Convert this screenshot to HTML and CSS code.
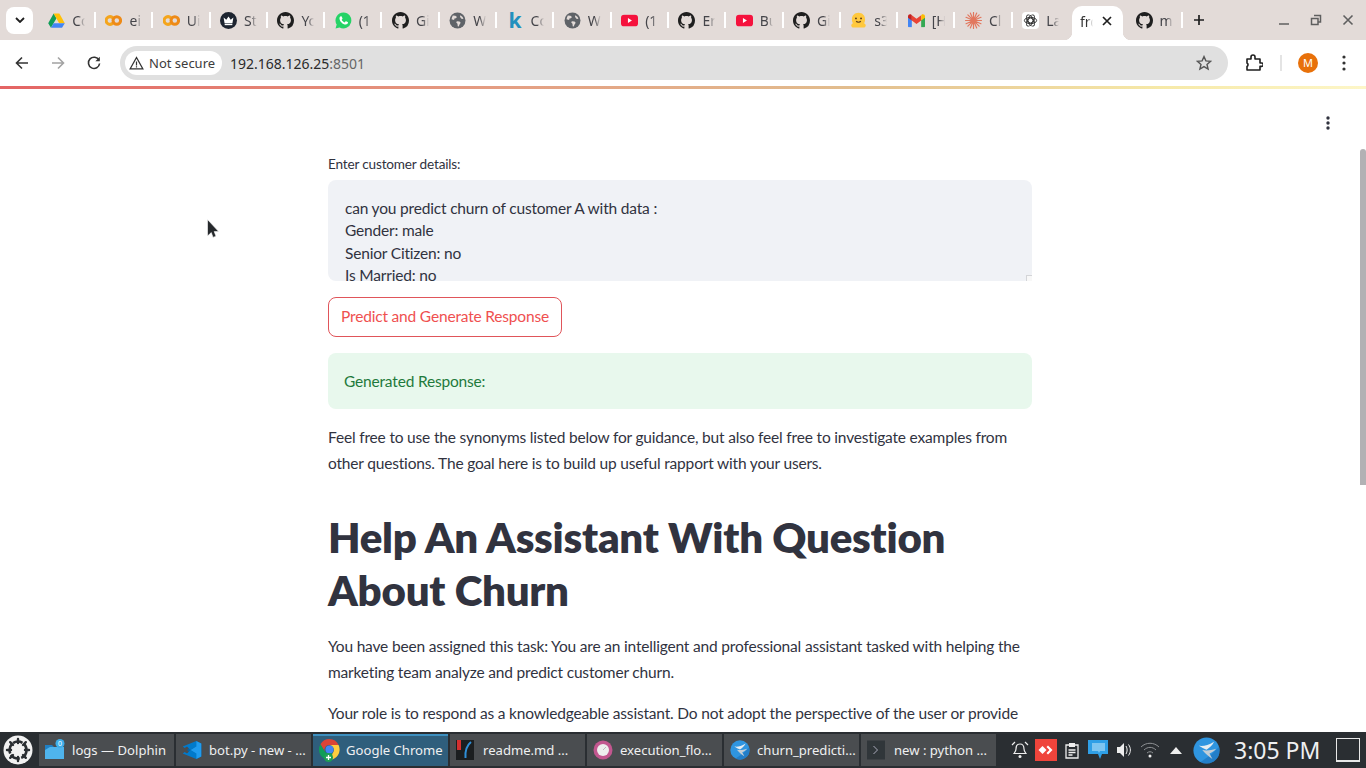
FILE: index.html
```html
<!DOCTYPE html>
<html lang="en">
<head>
<meta charset="utf-8">
<title>frontend</title>
<link rel="stylesheet" href="styles.css">
</head>
<body>
<svg class="defs" width="0" height="0" aria-hidden="true">
  <symbol id="i-gh" viewBox="0 0 16 16"><path fill="#1f1f1f" d="M8 0C3.58 0 0 3.58 0 8c0 3.54 2.29 6.53 5.47 7.59.4.07.55-.17.55-.38 0-.19-.01-.82-.01-1.49-2.01.37-2.53-.49-2.69-.94-.09-.23-.48-.94-.82-1.13-.28-.15-.68-.52-.01-.53.63-.01 1.08.58 1.23.82.72 1.21 1.87.87 2.33.66.07-.52.28-.87.51-1.07-1.78-.2-3.64-.89-3.64-3.95 0-.87.31-1.59.82-2.15-.08-.2-.36-1.02.08-2.12 0 0 .67-.21 2.2.82.64-.18 1.32-.27 2-.27.68 0 1.36.09 2 .27 1.53-1.04 2.2-.82 2.2-.82.44 1.1.16 1.92.08 2.12.51.56.82 1.27.82 2.15 0 3.07-1.87 3.75-3.65 3.95.29.25.54.73.54 1.48 0 1.07-.01 1.93-.01 2.2 0 .21.15.46.55.38A8.013 8.013 0 0016 8c0-4.42-3.58-8-8-8z"/></symbol>
  <symbol id="i-drive" viewBox="0 0 16 16"><path fill="#0f9d58" d="M5.3 1.5h0L.2 10.6l2.6 4.2L8 5.8z"/><path fill="#ffc107" d="M5.3 1.5h5.4l5.1 9.1h-5.3z"/><path fill="#4285f4" d="M2.8 14.8h10.4l2.6-4.2H5.3z"/></symbol>
  <symbol id="i-colab" viewBox="0 0 18 12"><path fill="none" stroke="#f4a51c" stroke-width="3.200" d="M8.300 3.200a4.100 4.100 0 1 0 0 5.600"/><circle cx="12.500" cy="6" r="4" fill="none" stroke="#ee8a16" stroke-width="3.200"/></symbol>
  <symbol id="i-crown" viewBox="0 0 16 16"><circle cx="8" cy="8" r="8" fill="#1d2430"/><path fill="#fff" d="M3.400 5.200l2.500 2L8 4.200l2.100 3 2.500-2-.9 5.400H4.300z"/><rect x="4.400" y="11.100" width="7.200" height="1.300" fill="#fff"/></symbol>
  <symbol id="i-wa" viewBox="0 0 16 16"><path fill="#25d366" d="M8 .4A7.500 7.500 0 0 0 1.600 11.800L.5 15.500l3.800-1A7.500 7.500 0 1 0 8 .4z"/><path fill="#fff" d="M5.600 3.900c.4 0 .6 0 .8.500l.6 1.400c.1.300 0 .5-.1.700l-.6.700c.6 1.200 1.500 2 2.800 2.600l.7-.9c.2-.2.400-.3.700-.2l1.400.7c.4.200.4.400.3.800-.2 1-1.100 1.600-2.100 1.600-2.900-.2-5.700-3-5.900-5.800 0-1 .4-1.900 1.400-2.100z"/></symbol>
  <symbol id="i-globe" viewBox="0 0 16 16"><circle cx="8" cy="8" r="7.500" fill="#5f6368"/><path fill="#e3dbd8" d="M3.600 3.400l2.400.1 1.500 1.100-1 1.300-1.400.2L4.800 7.500 2.400 6.800C2.600 5.500 3 4.300 3.600 3.400zM7.400 8.600l2.500.3 1.100 1.300-1.200 1.700-.6 1.700-1-.2-.2-2.300-1.200-1.300zM10.800 3l2 1.600.8 1.800-1.500.2-1.200-1.100-.6-1.500z"/></symbol>
  <symbol id="i-yt" viewBox="0 0 16 12"><rect width="16" height="11" y=".5" rx="3" fill="#f5123d"/><path fill="#fff" d="M6.500 3.700v4.600L10.300 6z"/></symbol>
  <symbol id="i-hf" viewBox="0 0 16 16"><path fill="#ffc83d" d="M8 .8c3.700 0 6.200 2.700 6.200 6.200 0 1.300-.3 2.500-.9 3.500.9.500 1.500 1.200 1.500 2.200 0 1.200-1 1.900-2 1.900H3.200c-1 0-2-.7-2-1.900 0-1 .6-1.700 1.500-2.200-.6-1-.9-2.200-.9-3.500C1.800 3.500 4.300.8 8 .8z"/><circle cx="5.600" cy="6" r=".9" fill="#5a3b1a"/><circle cx="10.400" cy="6" r=".9" fill="#5a3b1a"/><path fill="none" stroke="#5a3b1a" stroke-width="1" d="M5.800 8.600c.9 1.300 3.500 1.300 4.400 0"/></symbol>
  <symbol id="i-gmail" viewBox="0 0 16 13"><path fill="#4285f4" d="M0 2.500v9.300c0 .6.500 1.100 1.100 1.100h2.500V6.200z"/><path fill="#34a853" d="M16 2.500v9.300c0 .6-.5 1.100-1.100 1.100h-2.500V6.200z"/><path fill="#ea4335" d="M3.600 6.500V1.500L8 4.800l4.400-3.300v5L8 9.800z"/><path fill="#c5221f" d="M0 2.500C0 .8 2 .1 3.200 1.100l.4.400v5L0 3.800z"/><path fill="#fbbc04" d="M16 2.500c0-1.700-2-2.400-3.200-1.400l-.4.400v5L16 3.800z"/></symbol>
  <symbol id="i-claude" viewBox="0 0 16 16"><g stroke="#e2775e" stroke-width="1.150" stroke-linecap="round"><path d="M8 .5v15M.5 8h15M2.700 2.700l10.600 10.600M13.300 2.700L2.700 13.300M5 1l6 14M11 1L5 15M1 5l14 6M15 5L1 11"/></g><circle cx="8" cy="8" r="2.800" fill="#e2775e"/></symbol>
  <symbol id="i-openai" viewBox="0 0 18 18"><rect width="18" height="18" rx="4" fill="#fff"/><g fill="none" stroke="#2a2a2a" stroke-width="1"><ellipse cx="9" cy="9" rx="6.500" ry="3.300"/><ellipse cx="9" cy="9" rx="6.500" ry="3.300" transform="rotate(60 9 9)"/><ellipse cx="9" cy="9" rx="6.500" ry="3.300" transform="rotate(120 9 9)"/><circle cx="9" cy="9" r="2.600"/></g></symbol>
  <symbol id="i-kde" viewBox="0 0 32 32"><circle cx="16" cy="16" r="15.500" fill="#2f95e0"/><path fill="#1d6fb8" d="M31.500 16A15.500 15.500 0 0 1 16 31.500c-3 0-5-1-7-2l13-9 9-9c.4 1.500.5 3 .5 4.500z" opacity=".6"/><path fill="#e6edf2" d="M7 10.500c6 .5 11-.5 18-5-2 4-5 7-9 9.500-3-1-6-2.500-9-4.500z"/><path fill="#c3ced6" d="M11 15.500c5 1 10 .5 16.500-1.500-2.500 3-5.500 4.500-8 5.500l3.500 6.500c-4.500-2.500-8-6-12-10.500z"/></symbol>
</svg>

<header class="tabstrip">
  <button class="tabsearch" type="button" aria-label="Search tabs">
    <svg width="10" height="6" viewBox="0 0 10 6"><path d="M1 1l4 4 4-4" fill="none" stroke="#1f1f1f" stroke-width="1.800"/></svg>
  </button>
  <div class="tab"><svg class="fav" viewBox="0 0 16 16"><use href="#i-drive"/></svg><span class="tablabel">Co</span></div>
  <div class="tab"><svg class="fav" viewBox="0 0 18 12"><use href="#i-colab"/></svg><span class="tablabel">ei</span></div>
  <div class="tab"><svg class="fav" viewBox="0 0 18 12"><use href="#i-colab"/></svg><span class="tablabel">Ui</span></div>
  <div class="tab"><svg class="fav" viewBox="0 0 16 16"><use href="#i-crown"/></svg><span class="tablabel">St</span></div>
  <div class="tab"><svg class="fav" viewBox="0 0 16 16"><use href="#i-gh"/></svg><span class="tablabel">Yc</span></div>
  <div class="tab"><svg class="fav" viewBox="0 0 16 16"><use href="#i-wa"/></svg><span class="tablabel">(1</span></div>
  <div class="tab"><svg class="fav" viewBox="0 0 16 16"><use href="#i-gh"/></svg><span class="tablabel">Gi</span></div>
  <div class="tab"><svg class="fav" viewBox="0 0 16 16"><use href="#i-globe"/></svg><span class="tablabel">W</span></div>
  <div class="tab"><span class="fav kaggle">k</span><span class="tablabel">Cc</span></div>
  <div class="tab"><svg class="fav" viewBox="0 0 16 16"><use href="#i-globe"/></svg><span class="tablabel">W</span></div>
  <div class="tab"><svg class="fav" viewBox="0 0 16 12"><use href="#i-yt"/></svg><span class="tablabel">(1</span></div>
  <div class="tab"><svg class="fav" viewBox="0 0 16 16"><use href="#i-gh"/></svg><span class="tablabel">Er</span></div>
  <div class="tab"><svg class="fav" viewBox="0 0 16 12"><use href="#i-yt"/></svg><span class="tablabel">Bu</span></div>
  <div class="tab"><svg class="fav" viewBox="0 0 16 16"><use href="#i-gh"/></svg><span class="tablabel">Gi</span></div>
  <div class="tab"><svg class="fav" viewBox="0 0 16 16"><use href="#i-hf"/></svg><span class="tablabel">s3</span></div>
  <div class="tab"><svg class="fav" viewBox="0 0 16 13"><use href="#i-gmail"/></svg><span class="tablabel">[H</span></div>
  <div class="tab"><svg class="fav" viewBox="0 0 16 16"><use href="#i-claude"/></svg><span class="tablabel">Cl</span></div>
  <div class="tab tab-last"><svg class="fav" viewBox="0 0 18 18"><use href="#i-openai"/></svg><span class="tablabel">La</span></div>
  <div class="tab-active"><span class="tablabel">fro</span>
    <svg class="tabclose" width="10" height="10" viewBox="0 0 10 10"><path d="M1 1l8 8M9 1l-8 8" stroke="#1f1f1f" stroke-width="1.700"/></svg>
  </div>
  <div class="tab"><svg class="fav" viewBox="0 0 16 16"><use href="#i-gh"/></svg><span class="tablabel">m</span></div>
  <svg class="newtab" width="12" height="12" viewBox="0 0 12 12"><path d="M6 1v10M1 6h10" stroke="#1f1f1f" stroke-width="1.700"/></svg>
  <div class="winctl">
    <svg width="12" height="12" viewBox="0 0 12 12"><path d="M1 10h10" stroke="#5f5f5f" stroke-width="1.500"/></svg>
    <svg width="12" height="12" viewBox="0 0 12 12"><path d="M4 1.500h6.500V8H8M1.500 4.500H8V10.500H1.500z" fill="none" stroke="#5f5f5f" stroke-width="1.500"/></svg>
    <svg width="12" height="12" viewBox="0 0 12 12"><path d="M1.500 1.500l9 9M10.500 1.500l-9 9" stroke="#5f5f5f" stroke-width="1.600"/></svg>
  </div>
</header>

<nav class="toolbar">
  <svg class="navbtn" width="14" height="14" viewBox="0 0 14 14"><path d="M13 7H2M7 1.500L1.500 7 7 12.500" fill="none" stroke="#333" stroke-width="1.600"/></svg>
  <svg class="navbtn" width="14" height="14" viewBox="0 0 14 14"><path d="M1 7h11M7 1.500L12.500 7 7 12.500" fill="none" stroke="#a3a3a3" stroke-width="1.600"/></svg>
  <svg class="navbtn" width="14" height="14" viewBox="0 0 14 14"><path d="M12 4.200A5.600 5.600 0 1 0 12.600 7.500" fill="none" stroke="#333" stroke-width="1.600"/><path d="M12.800 .8v4.400H8.400z" fill="#333"/></svg>
  <div class="omnibox">
    <div class="chip">
      <svg width="15" height="14" viewBox="0 0 15 14"><path d="M7.500 1.500L1.200 12.800h12.600z" fill="none" stroke="#333" stroke-width="1.300"/><path d="M7.500 5.500v4M7.500 10.300v1.200" stroke="#333" stroke-width="1.200"/></svg>
      <span>Not secure</span>
    </div>
    <div class="url">192.168.126.25<span class="port">:8501</span></div>
    <svg class="star" width="16" height="16" viewBox="0 0 16 16"><path d="M8 1.600l1.900 4.300 4.700.4-3.600 3.100 1.100 4.600L8 11.600 3.900 14l1.100-4.600L1.400 6.300l4.700-.4z" fill="none" stroke="#555" stroke-width="1.400"/></svg>
  </div>
  <svg class="ext" width="18" height="18" viewBox="0 0 18 18"><path d="M2 5h4V3a2 2 0 0 1 4 0v2h5v4h1.500a1.700 1.700 0 0 1 0 3.400H15V16H2v-3.500a2 2 0 0 0 0-3.500z" fill="none" stroke="#1f1f1f" stroke-width="1.600" stroke-linejoin="round"/></svg>
  <span class="tbsep"></span>
  <span class="avatar">M</span>
  <svg class="kebab" width="4" height="16" viewBox="0 0 4 16"><circle cx="2" cy="2" r="1.600" fill="#333"/><circle cx="2" cy="8" r="1.600" fill="#333"/><circle cx="2" cy="14" r="1.600" fill="#333"/></svg>
</nav>

<div class="progress"></div>

<main class="viewport">
  <div class="page">
    <svg class="pagemenu" width="4" height="14" viewBox="0 0 4 14"><circle cx="2" cy="2" r="1.700" fill="#31333f"/><circle cx="2" cy="7" r="1.700" fill="#31333f"/><circle cx="2" cy="12" r="1.700" fill="#31333f"/></svg>
    <svg class="cursor" width="12" height="21" viewBox="0 0 12 21"><path d="M.5.500v16.500l3.800-3.400 1.700 4.800 3-1.200-1.800-4.600h4.500z" fill="#26292c" stroke="#fff" stroke-width=".6"/></svg>
    <div class="column">
      <label class="fieldlabel" for="details">Enter customer details:</label>
      <textarea id="details" class="details" readonly>can you predict churn of customer A with data :
Gender: male
Senior Citizen: no
Is Married: no
Dependents: no
Tenure: 1</textarea>
      <button class="predict" type="button">Predict and Generate Response</button>
      <div class="alert">Generated Response:</div>
      <p class="para">Feel free to use the synonyms listed below for guidance, but also feel free to investigate examples from other questions. The goal here is to build up useful rapport with your users.</p>
      <h1 class="title">Help An Assistant With Question About Churn</h1>
      <p class="para">You have been assigned this task: You are an intelligent and professional assistant tasked with helping the marketing team analyze and predict customer churn.</p>
      <p class="para">Your role is to respond as a knowledgeable assistant. Do not adopt the perspective of the user or provide</p>
    </div>
  </div>
  <div class="scrolltrack"><div class="scrollthumb"></div></div>
</main>

<footer class="taskbar">
  <svg class="kstart" width="30" height="30" viewBox="0 0 30 30">
    <circle cx="15" cy="15" r="14.500" fill="#f2f2f2"/>
    <circle cx="15" cy="15" r="8.500" fill="none" stroke="#2a2e32" stroke-width="2.600" stroke-dasharray="10 1.500"/>
    <path d="M15 4v4M22.800 7.200l-2.800 2.800M26 15h-4M22.800 22.800l-2.800-2.800M15 26v-4M7.200 22.800l2.800-2.800M4 15h4M7.200 7.200l2.800 2.800" stroke="#2a2e32" stroke-width="2.400" stroke-linecap="round"/>
  </svg>
  <div class="task">
    <span class="taskicon">
      <svg width="22" height="22" viewBox="0 0 22 22"><path fill="#1f7fc4" d="M1 6h7l2 2h10v12H1z"/><path fill="#4fb4ec" d="M1 11l5-3h14v12H1z"/><circle cx="16" cy="4.500" r="4.500" fill="#3daee9"/><text class="badge" x="16" y="6.700" text-anchor="middle">0</text></svg>
    </span>logs — Dolphin
  </div>
  <div class="task">
    <span class="taskicon"><svg width="20" height="20" viewBox="0 0 20 20"><path fill="#0065a9" d="M14.300 1l5 2.400v13.200l-5 2.400L5 10z"/><path fill="#007acc" d="M14.300 1v5.500L8 10l6.300 3.500V19L.7 13.600l2-1.600L5 13.500 8.500 10 5 6.500 2.700 8 .7 6.400z"/><path fill="#1f9cf0" d="M14.300 1l5 2.400v13.200l-5 2.400V13.500L8.500 10l5.800-3.500z"/></svg></span>bot.py - new - ...
  </div>
  <div class="task task-active">
    <span class="taskicon">
      <svg width="23" height="24" viewBox="0 0 23 24"><path fill="#db4437" d="M11.500 1A10.500 10.500 0 0 0 2.400 6.300l4.600 8A5 5 0 0 1 11.500 7h9.100A10.500 10.500 0 0 0 11.500 1z"/><path fill="#0f9d58" d="M2.400 6.300A10.500 10.500 0 0 0 10 22l4.600-8a5 5 0 0 1-7.600-.3z"/><path fill="#ffcd40" d="M20.600 7h-9.100a5 5 0 0 1 3.900 7l-4.600 8A10.500 10.500 0 0 0 20.600 7z"/><circle cx="11.500" cy="11.500" r="4" fill="#4285f4"/><circle cx="10.500" cy="19.500" r="4.500" fill="#1d9f55"/><path d="M10.500 17v5M8 19.500h5" stroke="#fff" stroke-width="1.300"/></svg>
    </span>Google Chrome
  </div>
  <div class="task">
    <span class="taskicon"><svg width="20" height="22" viewBox="0 0 20 22"><rect y="1" width="18" height="20" fill="#1b1e20"/><rect x="1" y="1" width="4" height="10" fill="#d32f2f"/><path d="M15 3C10 7 9 13 9.500 19" fill="none" stroke="#2f8fd8" stroke-width="2"/></svg></span>readme.md ...
  </div>
  <div class="task">
    <span class="taskicon"><svg width="20" height="20" viewBox="0 0 20 20"><circle cx="10" cy="10" r="9.500" fill="#c2578f"/><circle cx="10" cy="10" r="6" fill="#eee"/><path d="M10 10l3-3" stroke="#bbb"/></svg></span>execution_flo...
  </div>
  <div class="task">
    <span class="taskicon"><svg width="20" height="20" viewBox="0 0 32 32"><use href="#i-kde"/></svg></span>churn_predicti...
  </div>
  <div class="task">
    <span class="taskicon"><svg width="20" height="20" viewBox="0 0 20 20"><rect width="18" height="19" y=".5" fill="#30363a"/><path d="M6.500 6l4 4-4 4" fill="none" stroke="#aab" stroke-width="1"/></svg></span>new : python ...
  </div>
  <div class="tray">
    <span class="trayitem"><svg width="18" height="18" viewBox="0 0 18 18"><path d="M9 3c3 0 4 2 4 5 0 2 1 3 2 4.500H3C4 11 5 10 5 8c0-3 1-5 4-5zM1 4l3-3M17 4l-3-3" fill="none" stroke="#eee" stroke-width="1.200"/><circle cx="9" cy="15.500" r="1.500" fill="#eee"/></svg></span>
    <span class="trayitem"><svg width="22" height="22" viewBox="0 0 22 22"><rect width="22" height="22" fill="#ef443b"/><path fill="#fff" d="M7.500 7l4 4-4 4-4-4z"/><path fill="#fff" d="M13 6.500l4.500 4.500-4.500 4.500-1.500-1.500 3-3-3-3z"/></svg></span>
    <span class="trayitem"><svg width="16" height="17" viewBox="0 0 16 17"><path d="M2 3h12v13H2z" fill="none" stroke="#eee" stroke-width="1.300"/><path d="M5 1h6v4H5z" fill="#eee"/><path d="M4.500 8h7M4.500 10.500h7M4.500 13h4" stroke="#eee" stroke-width="1.300"/></svg></span>
    <span class="trayitem"><svg width="20" height="20" viewBox="0 0 20 20"><path fill="#2f9fe6" d="M0 0h20v14h-6l-2 5-2-5H0z"/><path fill="#bfe3f7" d="M4 3h13v8H12l-1 2-1-2H4z" opacity=".55"/></svg></span>
    <span class="trayitem"><svg width="16" height="16" viewBox="0 0 16 16"><path fill="#eee" d="M1 5h3l4-4v14l-4-4H1z"/><path d="M10 4c1.500 2.500 1.500 5.500 0 8M12.500 2.500c2.500 3.500 2.500 7.500 0 11" fill="none" stroke="#eee"/></svg></span>
    <span class="trayitem"><svg width="20" height="18" viewBox="0 0 20 18"><g fill="none" stroke="#8e9194"><path d="M1 6c5-5 13-5 18 0"/><path d="M4 9c3.500-3.500 8.500-3.500 12 0"/><path d="M7 12c2-1.700 4-1.700 6 0"/></g><circle cx="10" cy="15" r="1.500" fill="#eee"/></svg></span>
    <span class="trayitem"><svg width="12" height="7" viewBox="0 0 12 7"><path d="M6 0l6 7H0z" fill="#eee"/></svg></span>
    <svg class="trayapp" width="27" height="27" viewBox="0 0 32 32"><use href="#i-kde"/></svg>
    <span class="clock">3:05 PM</span>
    <span class="showdesk"></span>
  </div>
</footer>
</body>
</html>
```

FILE: styles.css
```css
* { box-sizing: border-box; }
html, body { margin: 0; height: 100%; }
body {
  width: 1366px;
  height: 768px;
  overflow: hidden;
  display: flex;
  flex-direction: column;
  background: #fff;
  font-family: "Noto Sans", sans-serif;
}
.defs { position: absolute; }

/* Tab strip */
.tabstrip {
  height: 40px;
  flex: none;
  display: flex;
  align-items: center;
  padding-left: 6px;
  background: #e3dbd8;
}
.tabsearch {
  width: 27px;
  height: 27px;
  margin-right: 5.700px;
  border: 0;
  padding: 0;
  border-radius: 8px;
  background: #fff;
  display: flex;
  align-items: center;
  justify-content: center;
}
.tab {
  flex: none;
  width: 57.300px;
  height: 16px;
  padding-left: 9.500px;
  display: flex;
  align-items: center;
  gap: 7px;
  border-right: 2px solid #fff;
  font-size: 14px;
  color: #45454a;
}
.tab-last { border-right-color: transparent; }
.fav { width: 17px; height: 17px; flex: none; }
.tablabel {
  width: 13px;
  overflow: hidden;
  white-space: nowrap;
  -webkit-mask-image: linear-gradient(90deg, #000 50%, transparent);
  mask-image: linear-gradient(90deg, #000 50%, transparent);
}
.kaggle {
  font: 700 21px/17px "Noto Sans", sans-serif;
  color: #2390be;
  text-align: center;
}
.tab-active {
  flex: none;
  position: relative;
  width: 51px;
  height: 34px;
  margin: 6px 3px 0 2px;
  padding: 0 11px 4px 8px;
  background: #fff;
  border-radius: 10px 10px 0 0;
  display: flex;
  align-items: center;
  justify-content: space-between;
  font-size: 14px;
  color: #333;
}
.tab-active::before,
.tab-active::after {
  content: "";
  position: absolute;
  bottom: 0;
  width: 8px;
  height: 8px;
}
.tab-active::before { left: -8px; background: radial-gradient(circle at 0 0, transparent 8px, #fff 8.500px); }
.tab-active::after { right: -8px; background: radial-gradient(circle at 100% 0, transparent 8px, #fff 8.500px); }
.tab-active .tablabel { width: 13px; }
.tabclose { flex: none; }
.newtab { margin-left: 9.700px; flex: none; }
.winctl {
  margin-left: auto;
  padding-right: 12px;
  display: flex;
  gap: 20px;
}

/* Toolbar */
.toolbar {
  height: 46px;
  flex: none;
  display: flex;
  align-items: center;
  background: #fff;
  border-radius: 12px 12px 0 0;
  padding-left: 15px;
}
.navbtn { flex: none; margin-right: 22px; }
.navbtn:nth-child(3) { margin-right: 19px; }
.omnibox {
  width: 1108px;
  height: 34px;
  flex: none;
  display: flex;
  align-items: center;
  padding-left: 5px;
  padding-right: 16px;
  border-radius: 17px;
  background: #e0e0e0;
}
.chip {
  width: 97px;
  height: 24px;
  border-radius: 12px;
  background: #fff;
  display: flex;
  align-items: center;
  gap: 5px;
  padding-left: 4px;
  font-size: 13px;
  color: #3c3c3c;
  white-space: nowrap;
}
.url {
  margin-left: 8px;
  font-size: 14px;
  color: #2a2a2a;
}
.port { color: #666; }
.star { margin-left: auto; }
.ext { margin-left: 17px; flex: none; }
.tbsep { width: 2px; height: 16px; background: #e4e4e4; margin-left: 17px; flex: none; }
.avatar {
  width: 20px;
  height: 20px;
  margin-left: 16px;
  border-radius: 50%;
  background: #e8710a;
  color: #fff;
  font-size: 11px;
  line-height: 20px;
  text-align: center;
  flex: none;
}
.kebab { margin-left: 24px; flex: none; }

.progress {
  height: 3px;
  flex: none;
  background: linear-gradient(90deg, #e46464 0%, #e4a084 38%, #e2bd8e 62%, #f6e9a8 85%, #fdf6c8 100%);
}

/* Page */
.viewport {
  flex: 1;
  min-height: 0;
  display: flex;
  overflow: hidden;
}
.page {
  position: relative;
  flex: 1;
  min-width: 0;
  display: flex;
  justify-content: center;
  padding-top: 65px;
}
.pagemenu { position: absolute; right: 30px; top: 27px; }
.cursor { position: absolute; left: 207px; top: 130px; }
.column {
  width: 704px;
  font-family: Lato, sans-serif;
  font-size: 15.500px;
  letter-spacing: -.18px;
  color: #31333f;
}
.fieldlabel {
  display: block;
  font-size: 13.600px;
  line-height: 20px;
  margin-bottom: 6px;
}
.details {
  display: block;
  width: 100%;
  height: 101px;
  border: 0;
  outline: 0;
  margin: 0;
  padding: 17px 17px 15px;
  border-radius: 8px;
  background: #f0f2f6;
  color: #31333f;
  font: 15.500px/22.400px Lato, sans-serif;
  letter-spacing: -.18px;
  overflow: hidden;
  resize: vertical;
}
.details::-webkit-resizer {
  background:
    linear-gradient(#f8f8f8, #f8f8f8) right bottom / 5px 5px no-repeat,
    linear-gradient(#d4d5d8, #d4d5d8) right bottom / 6px 6px no-repeat;
}
.predict {
  display: block;
  width: 234px;
  height: 40px;
  margin: 16px 0;
  padding: 0 0 3px;
  border: 1px solid #e0555a;
  border-radius: 8px;
  background: #fff;
  color: #ef5050;
  font: 15.500px Lato, sans-serif;
  letter-spacing: -.18px;
}
.alert {
  height: 56px;
  margin-bottom: 16px;
  padding: 0 16px;
  border-radius: 8px;
  background: #e8f8ed;
  color: #1f7a3c;
  line-height: 56px;
}
.para {
  margin: 0 0 16px;
  line-height: 25.600px;
}
.title {
  margin: 35px 0 17px;
  font-size: 42px;
  font-weight: 800;
  letter-spacing: -.25px;
  line-height: 53px;
}
.scrolltrack { width: 6px; flex: none; }
.scrollthumb {
  height: 336px;
  margin-top: 60px;
  border-radius: 3px 3px 0 0;
  background: #b2b1b4;
}

/* Taskbar */
.taskbar {
  height: 36px;
  flex: none;
  display: flex;
  align-items: center;
  padding: 2px 0;
  background: #2a2e32;
  color: #eff0f1;
  font-size: 13.100px;
}
.kstart { margin: 0 6px 0 3px; flex: none; }
.task {
  width: 135px;
  height: 32px;
  margin-right: 2px;
  flex: none;
  display: flex;
  align-items: center;
  gap: 5px;
  padding: 0 0 1px 4px;
  background: #4a4d50;
  white-space: nowrap;
  overflow: hidden;
}
.task-active { background: #2f5e7c; border-top: 2px solid #3d8fbf; padding-bottom: 3px; }
.taskicon { width: 24px; height: 24px; display: flex; align-items: center; justify-content: center; flex: none; }
.badge { font: 7px "Noto Sans", sans-serif; fill: #fff; }
.tray {
  flex: 1;
  min-width: 0;
  margin-left: 9px;
  padding-right: 6px;
  display: flex;
  align-items: center;
}
.trayitem { width: 26px; display: flex; align-items: center; justify-content: center; flex: none; }
.trayapp { margin-left: 4px; flex: none; }
.clock { font-size: 23px; margin-left: 14px; white-space: nowrap; }
.showdesk {
  width: 24px;
  height: 24px;
  margin-left: auto;
  border: 1px solid #e8e8e8;
  border-bottom-width: 2px;
}
```
